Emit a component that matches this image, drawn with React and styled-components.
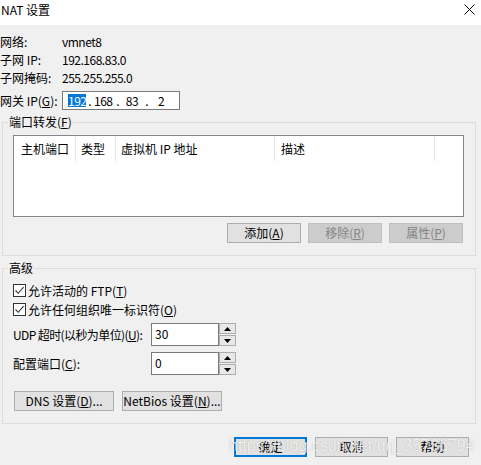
import React from "react";
import styled, { createGlobalStyle } from "styled-components";

const Global = createGlobalStyle`
  html, body { margin: 0; padding: 0; background: #f0f0f0; }
  body {
    font-family: "Noto Sans CJK SC", "Noto Sans", sans-serif;
    font-size: 12px;
    color: #000;
  }
  * { box-sizing: border-box; }
`;

const Window = styled.div`
  position: relative;
  width: 481px;
  height: 465px;
  background: #f0f0f0;
  overflow: hidden;
`;

const TitleBar = styled.div`
  height: 25px;
  background: #fff;
  display: flex;
  align-items: flex-start;
  justify-content: space-between;
  padding: 2px 6px 0 1px;
`;

const Title = styled.span`
  font-size: 12px;
  line-height: 16px;
`;

const Body = styled.div`
  padding: 8px 5px 0 2px;
`;

const InfoGrid = styled.div`
  display: grid;
  grid-template-columns: 62px auto;
  grid-auto-rows: 18px;
  line-height: 18px;
  margin-left: -2px;
`;

const Value = styled.span`
  letter-spacing: -0.5px;
`;

const GatewayRow = styled.div`
  display: flex;
  align-items: center;
  margin: 4px 0 0 -2px;
  height: 19px;
`;

const GatewayLabel = styled.span`
  width: 62px;
  line-height: 19px;
  white-space: nowrap;
`;

const IpBox = styled.div`
  width: 118px;
  height: 19px;
  border: 1px solid #7a7a7a;
  background: #fff;
  display: flex;
  align-items: center;
  padding-left: 5px;
`;

const Octet = styled.span`
  width: ${(p) => p.$w}px;
  text-align: center;
  line-height: 13px;
  height: 13px;
  letter-spacing: -0.5px;
  white-space: nowrap;
  background: ${(p) => (p.$sel ? "#0078d7" : "transparent")};
  color: ${(p) => (p.$sel ? "#fff" : "#000")};
`;

const Dot = styled.span`
  width: ${(p) => p.$w}px;
  text-align: center;
  line-height: 13px;
`;

const Group = styled.fieldset`
  margin: ${(p) => p.$mt}px 0 0 0;
  padding: 0;
  border: 1px solid #dcdcdc;
  min-width: 0;
`;

const Legend = styled.legend`
  margin-left: 5px;
  padding: 0 1px;
  line-height: 14px;
  font-size: 12px;
`;

const GroupInner = styled.div`
  padding: 6px ${(p) => p.$pr}px ${(p) => p.$pb}px 10px;
`;

const ListBox = styled.div`
  height: 82px;
  border: 1px solid #828790;
  background: #fff;
`;

const HeaderRow = styled.div`
  display: grid;
  grid-template-columns: 62px 40px 159px 160px;
  height: 25px;
`;

const HeaderCell = styled.div`
  border-right: 1px solid #e5e5e5;
  padding-left: ${(p) => p.$pl}px;
  line-height: 25px;
  white-space: nowrap;
`;

const ButtonRow = styled.div`
  display: flex;
  justify-content: ${(p) => p.$justify || "flex-end"};
  gap: ${(p) => p.$gap}px;
  margin: ${(p) => p.$mt}px ${(p) => p.$mr || 0}px 0 ${(p) => p.$ml || 0}px;
`;

const Button = styled.button`
  width: ${(p) => p.$w}px;
  height: 20px;
  padding: 0;
  font-family: inherit;
  font-size: 12px;
  line-height: 16px;
  background: ${(p) => (p.disabled ? "#cccccc" : "#e1e1e1")};
  color: ${(p) => (p.disabled ? "#838383" : "#000")};
  border: ${(p) =>
    p.$default
      ? "2px solid #0078d7"
      : p.disabled
      ? "1px solid #bfbfbf"
      : "1px solid #adadad"};
  border-radius: 0;
  white-space: nowrap;
`;

const Key = styled.span`
  text-decoration: underline;
`;

const CheckRow = styled.label`
  display: flex;
  align-items: center;
  height: 19px;
  gap: 2px;
  white-space: nowrap;
`;

const CheckBox = styled.span`
  width: 13px;
  height: 13px;
  border: 1px solid #333;
  background: #fff;
  display: flex;
  align-items: center;
  justify-content: center;
`;

const SpinRow = styled.div`
  display: grid;
  grid-template-columns: 138px 68px 17px;
  align-items: center;
  height: 23px;
  margin-top: ${(p) => p.$mt}px;
`;

const SpinLabel = styled.span`
  white-space: nowrap;
  letter-spacing: ${(p) => (p.$tight ? "-0.6px" : "0")};
`;

const SpinInput = styled.div`
  height: 23px;
  border: 1px solid #7a7a7a;
  background: #fff;
  padding: 3px 0 0 3px;
  line-height: 14px;
`;

const SpinCol = styled.div`
  display: flex;
  flex-direction: column;
  gap: 1px;
  height: 23px;
`;

const SpinBtn = styled.div`
  height: 11px;
  border: 1px solid #adadad;
  background: #e8e8e8;
  display: flex;
  align-items: center;
  justify-content: center;
`;

const Footer = styled.div`
  display: flex;
  justify-content: flex-end;
  gap: 8px;
  padding: 13px 7px 0 0;
`;

const Watermark = styled.div`
  position: absolute;
  left: 229px;
  top: 438px;
  font-family: "Liberation Sans", Arial, sans-serif;
  font-size: 16px;
  line-height: 16px;
  color: rgba(255, 255, 255, 0.85);
  text-shadow: 0 0 1px rgba(0, 0, 0, 0.3);
  white-space: nowrap;
  pointer-events: none;
`;

const Tri = ({ up }) => (
  <svg width="7" height="4" viewBox="0 0 7 4">
    <path d={up ? "M0 4 L3.5 0 L7 4 Z" : "M0 0 L3.5 4 L7 0 Z"} fill="#000" />
  </svg>
);

const Check = () => (
  <CheckBox>
    <svg width="11" height="11" viewBox="0 0 11 11">
      <path d="M1.5 5.5 L4.2 8.3 L9.6 2.2" fill="none" stroke="#333" strokeWidth="1.1" />
    </svg>
  </CheckBox>
);

const Spinner = () => (
  <SpinCol>
    <SpinBtn>
      <Tri up />
    </SpinBtn>
    <SpinBtn>
      <Tri />
    </SpinBtn>
  </SpinCol>
);

export default function App() {
  return (
    <>
      <Global />
      <Window>
        <TitleBar>
          <Title>NAT 设置</Title>
          <svg width="11" height="11" viewBox="0 0 11 11" style={{ marginTop: 2 }}>
            <path d="M0.5 0.5 L10.5 10.5 M10.5 0.5 L0.5 10.5" stroke="#000" strokeWidth="1" />
          </svg>
        </TitleBar>
        <Body>
          <InfoGrid>
            <span>网络:</span>
            <Value>vmnet8</Value>
            <span>子网 IP:</span>
            <Value>192.168.83.0</Value>
            <span>子网掩码:</span>
            <Value>255.255.255.0</Value>
          </InfoGrid>
          <GatewayRow>
            <GatewayLabel>
              网关 IP(<Key>G</Key>):
            </GatewayLabel>
            <IpBox>
              <Octet $w={18} $sel>192</Octet>
              <Dot $w={8}>.</Dot>
              <Octet $w={18}>168</Octet>
              <Dot $w={12}>.</Dot>
              <Octet $w={16}>83</Octet>
              <Dot $w={14}>.</Dot>
              <Octet $w={14}>2</Octet>
            </IpBox>
          </GatewayRow>

          <Group $mt={5}>
            <Legend>
              端口转发(<Key>F</Key>)
            </Legend>
            <GroupInner $pr={11} $pb={12}>
              <ListBox>
                <HeaderRow>
                  <HeaderCell $pl={7}>主机端口</HeaderCell>
                  <HeaderCell $pl={5}>类型</HeaderCell>
                  <HeaderCell $pl={5}>虚拟机 IP 地址</HeaderCell>
                  <HeaderCell $pl={6}>描述</HeaderCell>
                </HeaderRow>
              </ListBox>
              <ButtonRow $gap={7} $mt={6} $mr={1}>
                <Button $w={74}>
                  添加(<Key>A</Key>)
                </Button>
                <Button $w={74} disabled>
                  移除(<Key>R</Key>)
                </Button>
                <Button $w={74} disabled>
                  属性(<Key>P</Key>)
                </Button>
              </ButtonRow>
            </GroupInner>
          </Group>

          <Group $mt={5}>
            <Legend>高级</Legend>
            <GroupInner $pr={11} $pb={12}>
              <CheckRow>
                <Check />
                <span>
                  允许活动的 FTP(<Key>T</Key>)
                </span>
              </CheckRow>
              <CheckRow>
                <Check />
                <span>
                  允许任何组织唯一标识符(<Key>O</Key>)
                </span>
              </CheckRow>
              <SpinRow $mt={4}>
                <SpinLabel $tight>
                  UDP 超时(以秒为单位)(<Key>U</Key>):
                </SpinLabel>
                <SpinInput>30</SpinInput>
                <Spinner />
              </SpinRow>
              <SpinRow $mt={6}>
                <SpinLabel>
                  配置端口(<Key>C</Key>):
                </SpinLabel>
                <SpinInput>0</SpinInput>
                <Spinner />
              </SpinRow>
              <ButtonRow $justify="flex-start" $gap={8} $mt={16} $ml={1}>
                <Button $w={100}>
                  DNS 设置(<Key>D</Key>)...
                </Button>
                <Button $w={100}>
                  NetBios 设置(<Key>N</Key>)...
                </Button>
              </ButtonRow>
            </GroupInner>
          </Group>

          <Footer>
            <Button $w={73} $default>
              确定
            </Button>
            <Button $w={73}>取消</Button>
            <Button $w={73}>帮助</Button>
          </Footer>
        </Body>
        <Watermark>https://blog.csdn.net/qq_35736794</Watermark>
      </Window>
    </>
  );
}
